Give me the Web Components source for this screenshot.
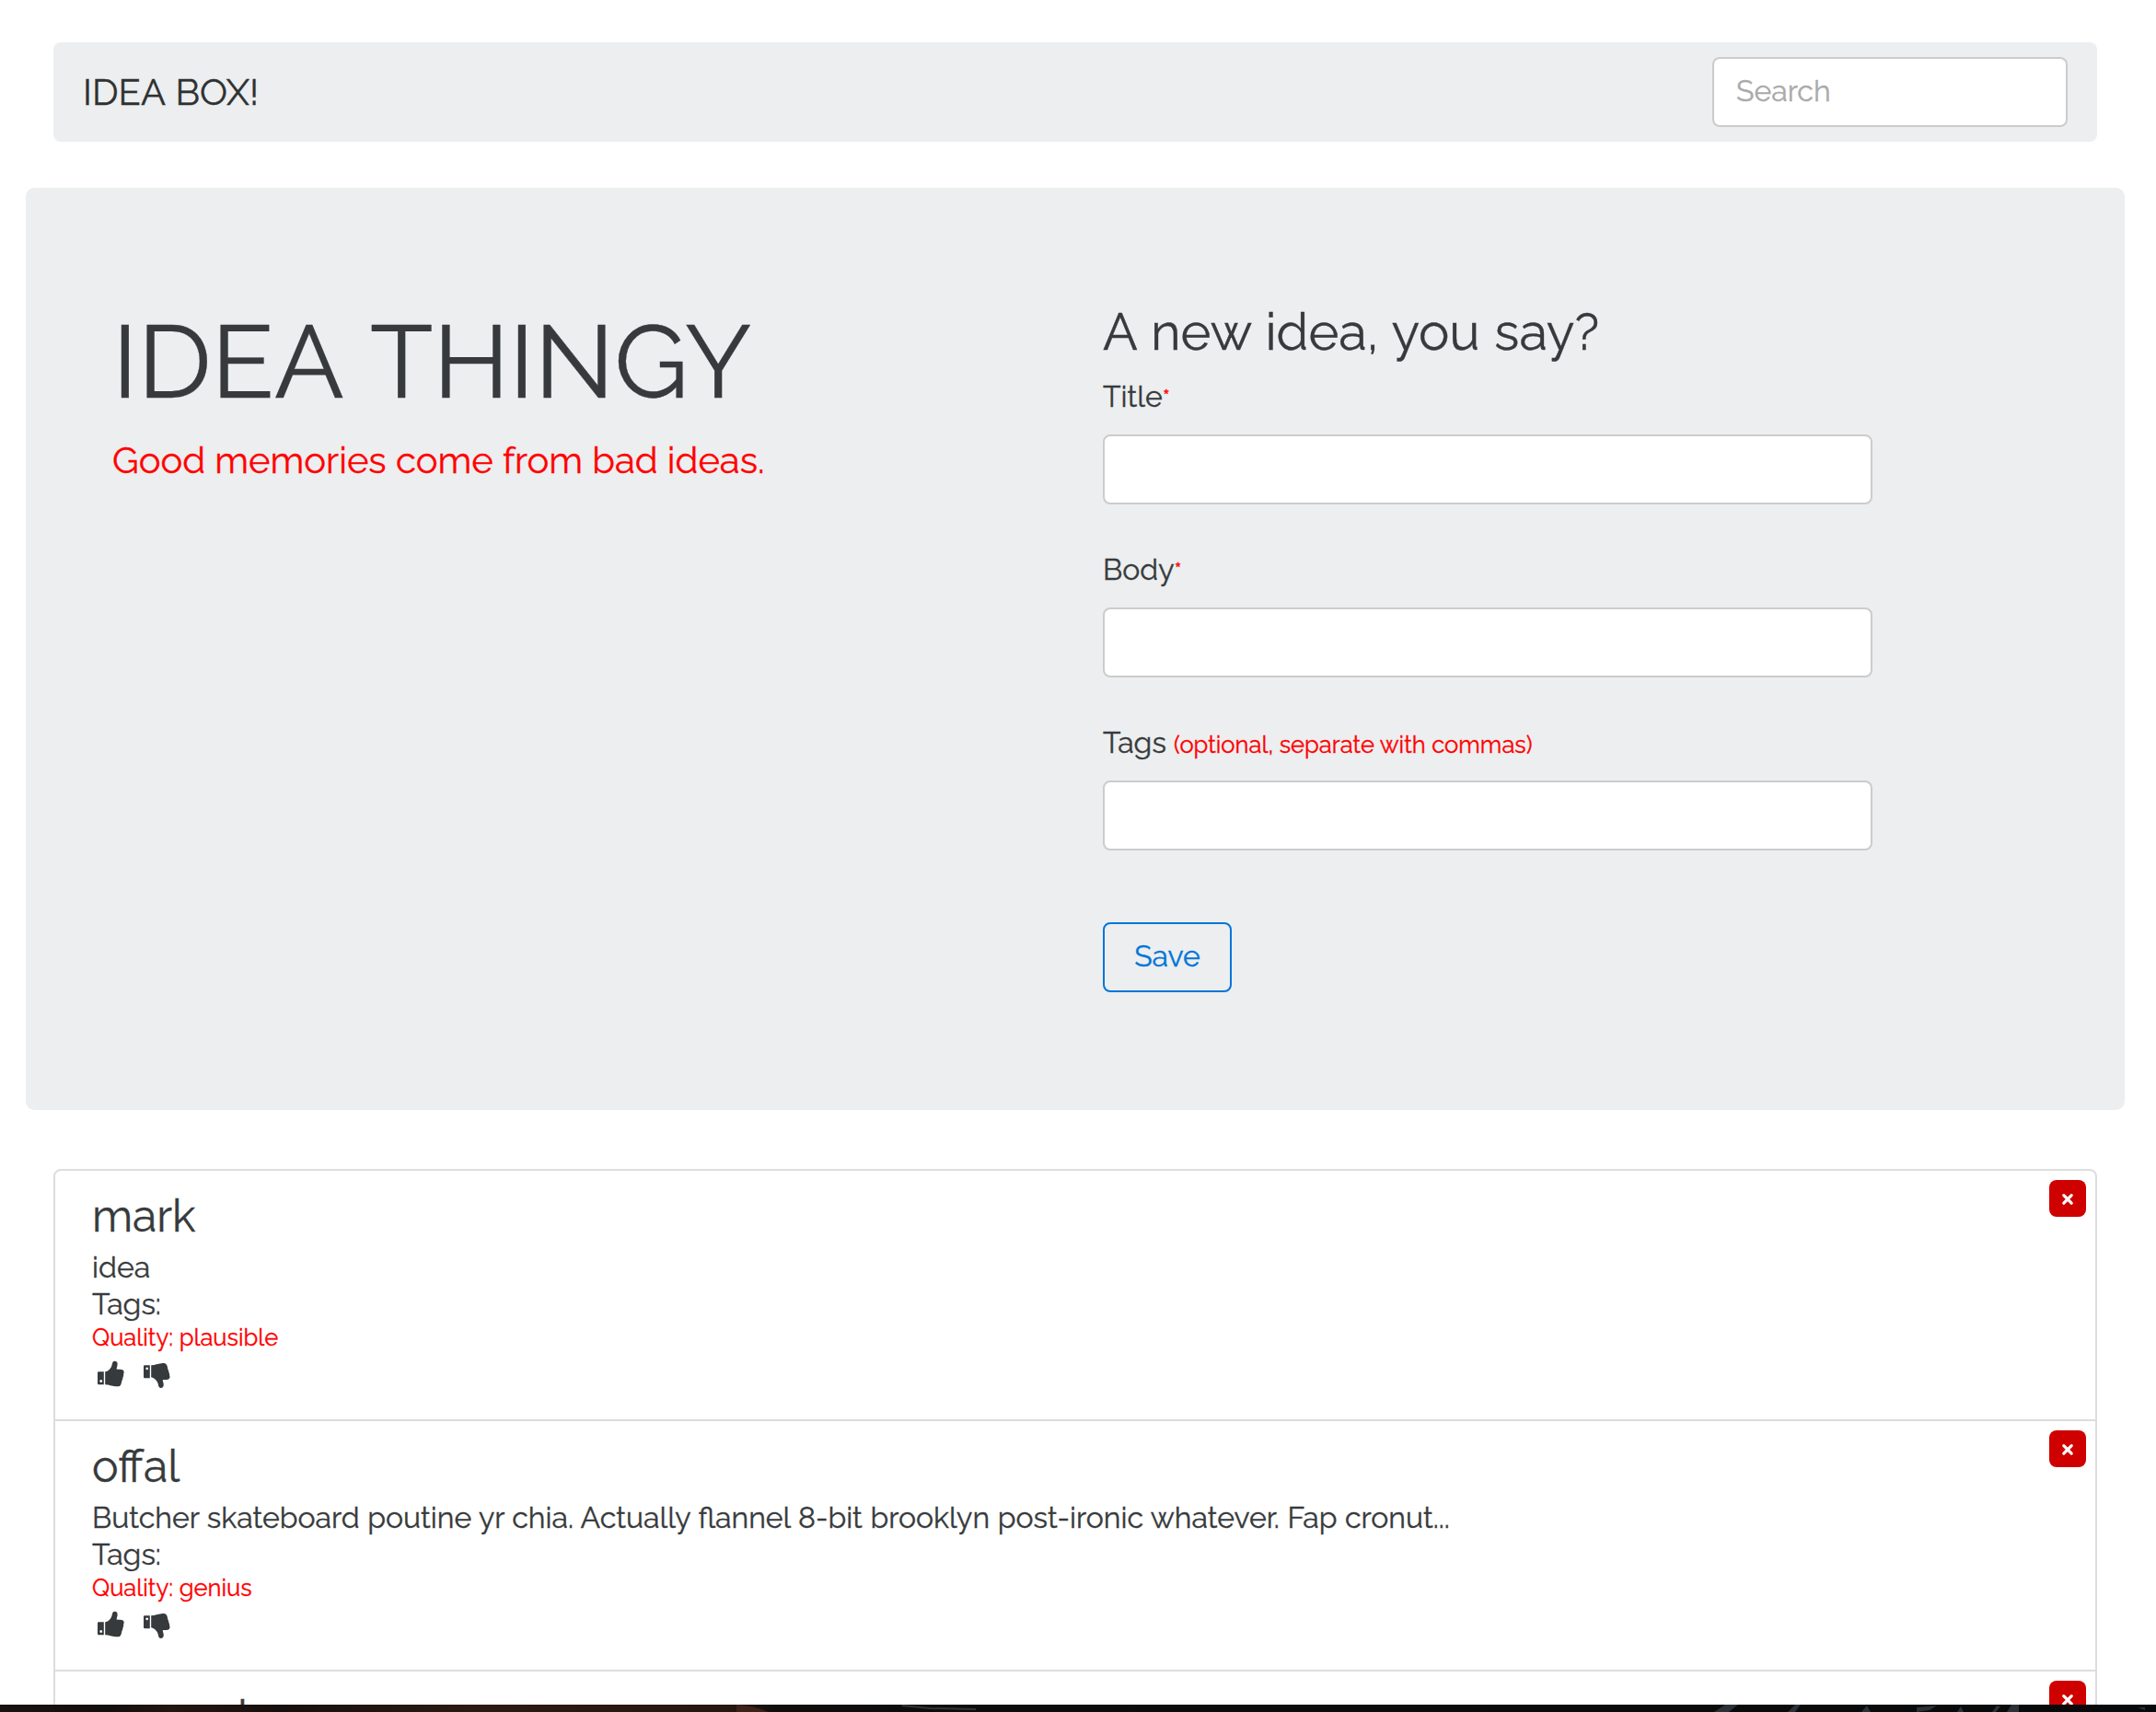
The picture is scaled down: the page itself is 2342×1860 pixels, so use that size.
<!DOCTYPE html>
<html lang="en">
<head>
<meta charset="utf-8">
<title>Idea Box</title>
<style>
html,body{margin:0;height:1860px;overflow:hidden;background:#fff}
body{font:32px/40px Raleway,Lato,sans-serif;color:#373a3c;-webkit-text-stroke:.35px}
</style>
</head>
<body>
<idea-app></idea-app>
<script>
function define(name, html){
  const t = document.createElement('template');
  t.innerHTML = html;
  customElements.define(name, class extends HTMLElement{
    constructor(){
      super();
      this.attachShadow({mode:'open'}).appendChild(t.content.cloneNode(true));
    }
  });
}

define('nav-bar', `<style>
:host{display:flex;align-items:center;justify-content:space-between;height:108px;padding:0 32px;box-sizing:border-box;background:#eceeef;border-radius:8px}
.brand{font-size:40px;line-height:61px;margin-bottom:1px;word-spacing:1.5px;color:#2f3131}
.search{display:flex;align-items:center;box-sizing:border-box;width:386px;height:76px;padding:0 24px 3px;border:2px solid #ccc;border-radius:8px;background:#fff;color:#aaa}
</style><span class="brand"><slot></slot></span><div class="search" role="searchbox"><span>Search</span></div>`);

define('form-field', `<style>
:host{display:block;margin-bottom:46px}
label{display:block;line-height:49px;margin-bottom:17px}
::slotted(small){font-size:25.6px;line-height:1;color:red}
input{display:block;width:100%;height:76px;box-sizing:border-box;border:2px solid #ccc;border-radius:8px;background:#fff;outline:0;font:inherit;padding:0 24px}
</style><label><slot></slot></label><input type="text">`);

define('save-button', `<style>
:host{display:flex;align-items:center;justify-content:center;box-sizing:border-box;width:140px;height:76px;padding-bottom:3px;border:2px solid #0275d8;border-radius:8px;color:#0275d8}
</style><slot></slot>`);

define('idea-hero', `<style>
:host{display:flex;box-sizing:border-box;height:1002px;padding:125px 94px 0;background:#eceeef;border-radius:9.6px}
.intro{width:1076px;padding-top:2px}
h1{margin:0 0 15px;font-size:112px;line-height:123px;font-weight:400;word-spacing:6.5px}
.lead{margin:0;font-size:40px;line-height:61px;color:red}
form{display:flex;flex-direction:column;width:836px}
h2{margin:0 0 15px;font-size:56px;line-height:62px;font-weight:400;word-spacing:1.5px}
save-button{margin-top:32px}
</style>
<div class="intro"><h1>IDEA THINGY</h1><p class="lead">Good memories come from bad ideas.</p></div>
<form><h2>A new idea, you say?</h2>
<form-field>Title<small>*</small></form-field>
<form-field>Body<small>*</small></form-field>
<form-field>Tags <small>(optional, separate with commas)</small></form-field>
<save-button>Save</save-button></form>`);

define('delete-button', `<style>
:host{display:block;width:40px;height:40px;border-radius:8px;background:#cf0000}
svg{display:block}
</style><svg width="40" height="40" viewBox="0 0 40 40"><path d="M15.8 16.6 24.2 25.2M24.2 16.6 15.8 25.2" stroke="#fff" stroke-width="3.2" stroke-linecap="round" fill="none"/></svg>`);

define('vote-icons', `<style>
:host{display:flex;gap:20px;padding:9px 0 0 5px}
svg{display:block;width:30px;height:32px;fill:#373a3c}
</style>
<svg viewBox="0 0 30 32"><path fill-rule="evenodd" d="M2 12.3h5.800v14H2.200q-1.200 0-1.200-1.200V13.500q0-1.200 1-1.200zM4.700 21.100a1.400 1.400 0 1 0 .01 0z"/><path d="M9.200 12.300c3.200-.5 5.200-2.900 6.600-5.100.7-1.200.9-2.400 1.100-3.600.3-1.700 1.200-2.900 2.700-2.900 2.100 0 3.300 1.500 3 4-.2 1.900-.9 3.400-1 4.700 2 .4 5.600 0 7 1 1.100.8 1.200 1.900 1 3.200-.3.700-.4 1-.4 1.700 0 .8.100 1.300-.2 2-.1.700-.6 1-.6 1.700 0 .8-.1 1.400-.5 2-.4.800-.6 1.100-.7 1.900-.3 1.700-.7 3.600-1.800 4.600-1 .9-3.200.9-5.100.7-4.300-.3-6.400-2-11.100-2z"/></svg>
<svg viewBox="0 0 30 32"><path fill-rule="evenodd" d="M2 5.300h5.800v14H2.200q-1.200 0-1.200-1.200V6.500q0-1.200 1-1.200zM4.700 7.500a1.400 1.400 0 1 0 .01 0z"/><path d="M9.200 5.200c4.700 0 6.800-1.700 11.100-2 1.900-.2 4.100-.2 5.100.7 1.100 1 1.500 2.900 1.700 4.600.1.800.4 1.200.7 1.900.4.700.5 1.200.5 2 0 .7.500 1 .6 1.700.3.700.2 1.200.2 2 .4 1.400.9 2.600-.4 3.900-1.400 1.200-5 .8-7 1.200.1 1.300.8 2.700 1 4.500.3 2.500-.9 4.300-3 4.300-1.500 0-2.400-1.200-2.700-2.900-.2-1.200-.4-2.500-1.100-3.700-1.400-2.200-3.400-4.700-6.700-5.100z"/></svg>`);

define('idea-card', `<style>
:host{display:flex;justify-content:space-between;box-sizing:border-box;height:272px;padding:23px 10px 0 40px;border-bottom:2px solid #ddd}
h3{margin:0 0 9.5px;font-size:48px;line-height:52px;font-weight:400}
p{margin:0;word-spacing:.43px}
.quality{padding-top:.5px;font-size:25.6px;line-height:32px;color:red;word-spacing:0}
delete-button{margin-top:-13px}
</style>
<div><h3><slot name="title"></slot></h3><p><slot name="body"></slot></p><p><slot name="tags">Tags:</slot></p><p class="quality"><slot name="quality"></slot></p><vote-icons></vote-icons></div>
<delete-button></delete-button>`);

define('photo-strip', `<style>
:host{display:block;height:8px;overflow:hidden;background:#0a0a0b}
svg{display:block}
</style>
<svg width="2342" height="8" viewBox="0 0 2342 8"><defs><linearGradient id="g"><stop offset="0" stop-color="#191210"/><stop offset=".05" stop-color="#120e0d"/><stop offset=".08" stop-color="#231510"/><stop offset=".13" stop-color="#170f0d"/><stop offset=".22" stop-color="#2a1a12"/><stop offset=".34" stop-color="#25160f"/><stop offset=".36" stop-color="#100d0c"/><stop offset=".42" stop-color="#0d0c0c"/><stop offset="1" stop-color="#08090a"/></linearGradient></defs>
<rect width="2342" height="8" fill="url(#g)"/>
<path d="M800 0q20 1 34 8h-34z" fill="#3c2218"/><path d="M980 1l30 3 50 1" stroke="#333" stroke-width="2" fill="none"/>
<path d="M1862 8l12-8h14l-10 8zM1942 8l8-8h6l-6 8zM2022 8l6-7 4 7zM2082 3l22-2-8 5-14 2zM2126 8l4-6 3 6zM2164 8l5-7 4 1-5 6zM2180 8l5-8 8 0 0 8zM2302 3l8-2M2322 3l8 0 0 3z" fill="#2b3136"/></svg>`);

define('idea-app', `<style>
:host{display:flex;flex-direction:column;height:1860px;box-sizing:border-box}
.page{flex:1;min-height:0;overflow:hidden;padding:46px 34px 0 28px;display:flex;flex-direction:column}
nav-bar{margin:0 30px 50px;flex:none}
idea-hero{flex:none}
.list{flex:none;margin:64px 30px 0;border:2px solid #ddd;border-radius:8px}
.partial{padding-left:158px}
</style>
<div class="page">
<nav-bar>IDEA BOX!</nav-bar>
<idea-hero></idea-hero>
<div class="list">
<idea-card><span slot="title">mark</span><span slot="body">idea</span><span slot="quality">Quality: plausible</span></idea-card>
<idea-card><span slot="title">offal</span><span slot="body">Butcher skateboard poutine yr chia. Actually flannel 8-bit brooklyn post-ironic whatever. Fap cronut...</span><span slot="quality">Quality: genius</span></idea-card>
<idea-card><span slot="title" class="partial">l</span><span slot="tags"></span></idea-card>
</div>
</div>
<photo-strip></photo-strip>`);
</script>
</body>
</html>
